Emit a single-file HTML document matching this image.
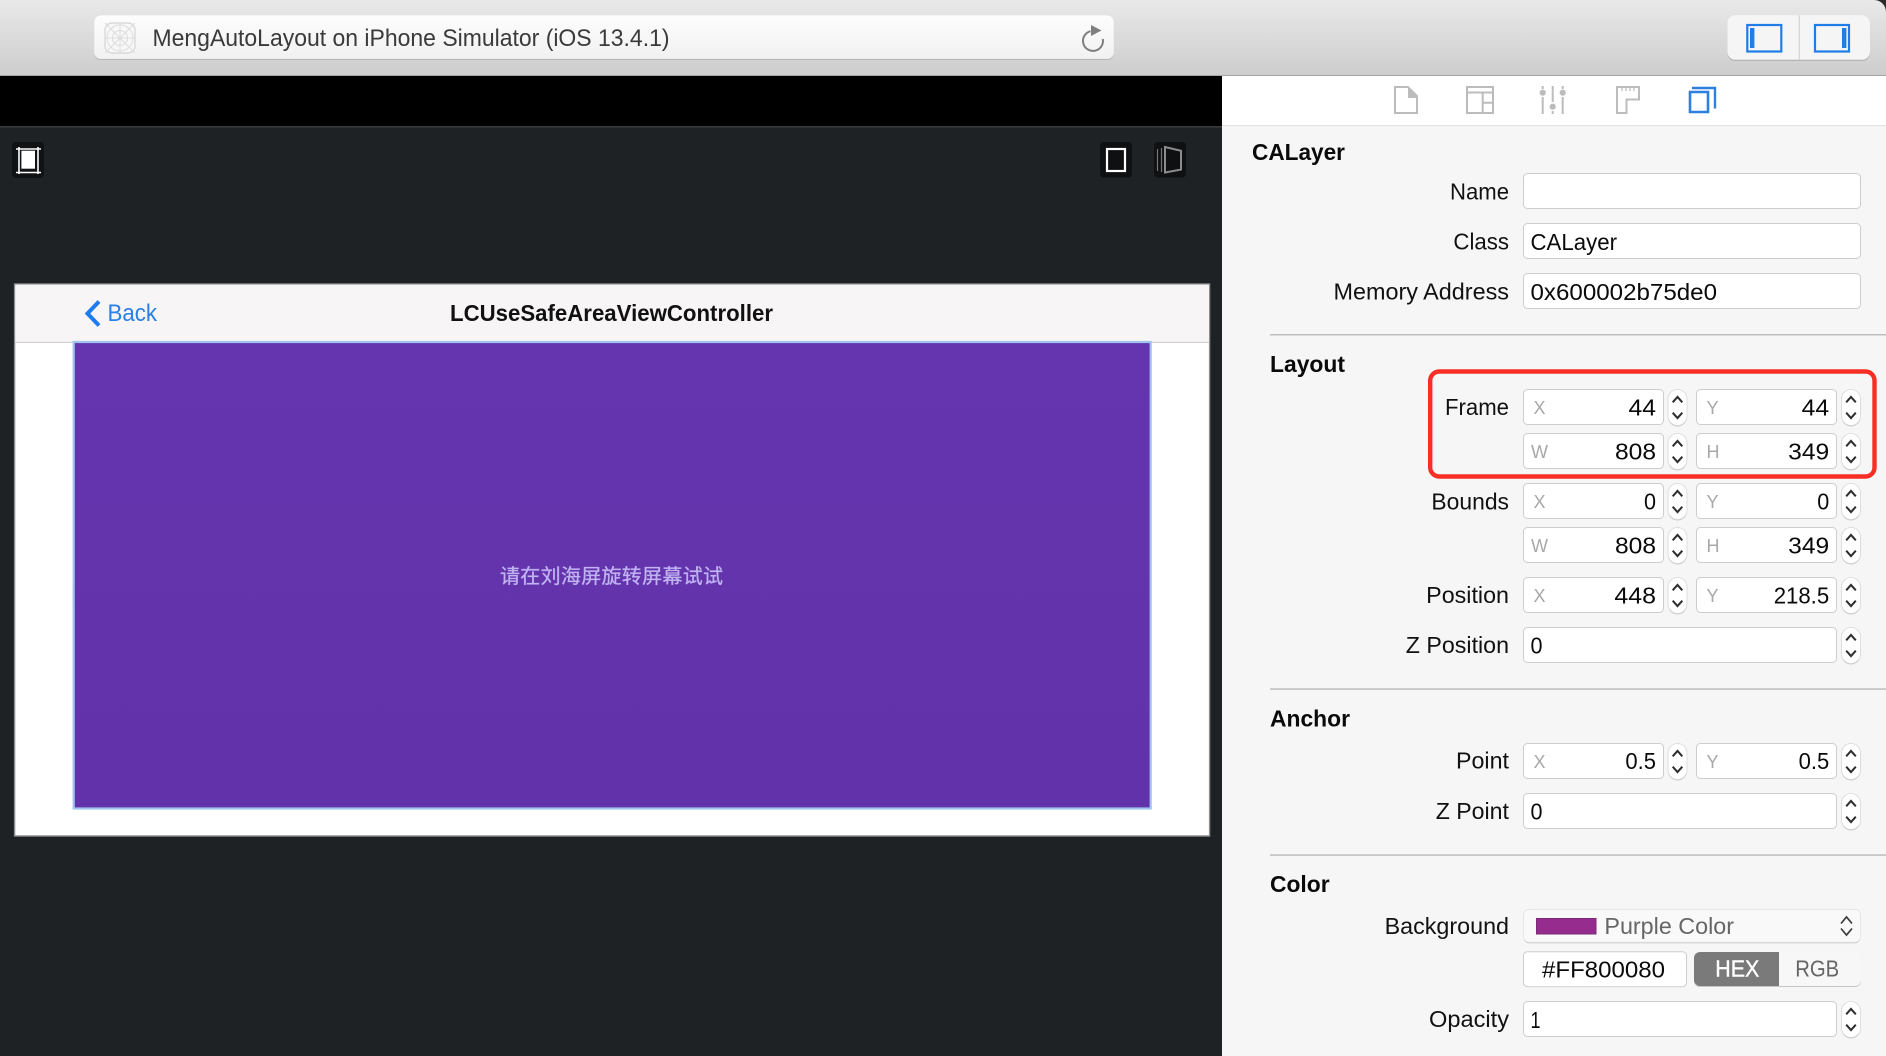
<!DOCTYPE html>
<html lang="zh">
<head>
<meta charset="utf-8">
<title>MengAutoLayout</title>
<style>
html,body{margin:0;padding:0;width:1886px;height:1056px;overflow:hidden;background:#1e2224}
svg{position:absolute;left:0;top:0;display:block}
text{font-family:"Liberation Sans","Noto Sans CJK SC",sans-serif}
.l{font-size:23px;fill:#111;text-anchor:end}
.h{font-size:23px;font-weight:bold;fill:#0a0a0a}
.v{font-size:23px;fill:#0a0a0a}
.r{font-size:23px;fill:#0a0a0a;text-anchor:end}
.p{font-size:18px;fill:#a8a8a8}
.f{fill:#fff;stroke:#cdcdcd;stroke-width:1}
.ic{fill:none;stroke:#bcbcbc;stroke-width:2}
</style>
</head>
<body>
<svg width="1886" height="1056" viewBox="0 0 1886 1056" xmlns="http://www.w3.org/2000/svg">
<defs>
<linearGradient id="tb" x1="0" y1="0" x2="0" y2="1"><stop offset="0" stop-color="#e9e9e9"/><stop offset="1" stop-color="#cdcdcd"/></linearGradient>
<linearGradient id="ub" x1="0" y1="0" x2="0" y2="1"><stop offset="0" stop-color="#fdfdfd"/><stop offset="1" stop-color="#f1f1f1"/></linearGradient>
<linearGradient id="pu" x1="0" y1="0" x2="0" y2="1"><stop offset="0" stop-color="#6535af"/><stop offset="1" stop-color="#6232aa"/></linearGradient>
<g id="st">
<rect x="0" y="1" width="19" height="36" rx="9.5" fill="#000" opacity=".2"/>
<rect x="0" y="0" width="19" height="36" rx="9.5" fill="#fff" stroke="#d8d8d8" stroke-width=".8"/>
<path d="M4.7 12.8 9.5 7.4 14.3 12.8M4.7 23.2 9.5 28.6 14.3 23.2" fill="none" stroke="#2e2e2e" stroke-width="2"/>
</g>
</defs>

<!-- title bar -->
<rect width="1886" height="75" fill="url(#tb)"/>
<rect y="75" width="1886" height="1.2" fill="#a6a6a6"/>
<path d="M1874 0H1886V12A12 12 0 0 0 1874 0Z" fill="#2b2b2b"/>
<rect x="94" y="16" width="1020" height="44" rx="7" fill="#a9a9a9"/>
<rect x="94" y="15" width="1020" height="44" rx="7" fill="url(#ub)" stroke="#dedede" stroke-width=".6"/>
<g>
<rect x="105" y="23" width="30" height="30" rx="7" fill="#f7f7f7" stroke="#d4d4d4" stroke-width="1.2"/>
<g fill="none" stroke="#dcdcdc" stroke-width="1">
<circle cx="120" cy="38" r="13"/><circle cx="120" cy="38" r="7.5"/>
<path d="M105 23 135 53M135 23 105 53M120 23V53M105 38H135"/>
</g>
</g>
<text x="152.5" y="46" font-size="24" fill="#3a3a3a" textLength="517" lengthAdjust="spacingAndGlyphs">MengAutoLayout on iPhone Simulator (iOS 13.4.1)</text>
<path d="M1090.5 31.2A10 10 0 1 0 1102.8 39" fill="none" stroke="#7f7f7f" stroke-width="2"/>
<path d="M1091 25V36L1101.5 30.5Z" fill="#7f7f7f"/>

<rect x="1727.3" y="16.3" width="142.7" height="44.5" rx="8" fill="#a9a9a9"/>
<rect x="1727.3" y="15.3" width="142.7" height="44.5" rx="8" fill="#f5f5f5"/>
<rect x="1798.6" y="15.3" width="1.4" height="44.5" fill="#d8d8d8"/>
<rect x="1747.3" y="25" width="34" height="26.5" fill="none" stroke="#1f7de8" stroke-width="2.2"/>
<rect x="1750" y="28" width="4.4" height="20" fill="#1f7de8"/>
<rect x="1815" y="25" width="34" height="26.5" fill="none" stroke="#1f7de8" stroke-width="2.2"/>
<rect x="1842" y="28" width="4.4" height="20" fill="#1f7de8"/>

<!-- black strip and canvas -->
<rect y="76" width="1222" height="50" fill="#000"/>
<rect y="126" width="1222" height="930" fill="#1e2224"/>
<rect y="126" width="1222" height="1.5" fill="#3b3e3f"/>

<rect x="12" y="142" width="32" height="36" rx="4" fill="#101214"/>
<rect x="21.4" y="150.7" width="13.6" height="18" fill="#fff"/>
<path d="M19 147V174M38 147V174M16 149H41M16 172.5H41" fill="none" stroke="#fff" stroke-width="1.6"/>

<rect x="1100" y="142" width="32" height="35.5" rx="4" fill="#0e1012"/>
<rect x="1107" y="149" width="18" height="22" fill="none" stroke="#fff" stroke-width="2.2"/>
<rect x="1154" y="142" width="32" height="35.5" rx="4" fill="#0e1012"/>
<path d="M1157.5 149V171M1161.5 148V172" stroke="#777" stroke-width="1.2" fill="none"/>
<path d="M1165 147 1181 150.8V169.6L1165 172.5Z" fill="none" stroke="#8c8c8c" stroke-width="2"/>

<!-- phone screen -->
<rect x="14.6" y="284" width="1195" height="552" fill="#fff" stroke="#8c8c8c" stroke-width="1.4"/>
<rect x="15.3" y="284.7" width="1193.6" height="57.1" fill="#f7f5f6"/>
<rect x="15.3" y="341.8" width="1193.6" height="1.2" fill="#d2d2d2"/>
<rect x="73.7" y="342" width="1077" height="466.5" fill="url(#pu)" stroke="#9fc5ee" stroke-width="2.2"/>
<path d="M99 301.5 87.5 313.5 99 325.5" fill="none" stroke="#1f7cee" stroke-width="4"/>
<text x="107.5" y="321" font-size="24" fill="#2a7fe8" textLength="49.5" lengthAdjust="spacingAndGlyphs">Back</text>
<text x="450" y="321" font-size="23" font-weight="bold" fill="#111" textLength="323" lengthAdjust="spacingAndGlyphs">LCUseSafeAreaViewController</text>
<text x="500" y="583" font-size="20" fill="#c2b4f4" stroke="#b9abf0" stroke-width=".35" textLength="223" lengthAdjust="spacing">请在刘海屏旋转屏幕试试</text>

<!-- inspector -->
<rect x="1222" y="76" width="664" height="980" fill="#f6f6f6"/>
<rect x="1222" y="76" width="664" height="49.5" fill="#fff"/>
<rect x="1222" y="125" width="664" height="1.2" fill="#e6e6e6"/>

<path d="M1395 87H1408L1417 96V113H1395Z" class="ic"/>
<path d="M1408 87 1417 96V98H1408Z" fill="#bcbcbc"/>
<rect x="1467" y="87" width="26" height="26" class="ic"/>
<path d="M1467 92.5H1493M1482.7 92.5V113M1482.7 102.7H1493" class="ic"/>
<path d="M1542.7 86V89M1542.7 97V114M1552.7 86V102M1552.7 111V114M1562.7 86V89M1562.7 97V114" stroke="#bcbcbc" stroke-width="2" fill="none"/>
<circle cx="1542.7" cy="92.7" r="3.1" fill="#bcbcbc"/>
<circle cx="1552.7" cy="106.7" r="3.1" fill="#bcbcbc"/>
<circle cx="1562.7" cy="92.7" r="3.1" fill="#bcbcbc"/>
<path d="M1617 87H1639V99.5H1626.5V113H1617Z" class="ic"/>
<path d="M1622 87V91M1626 87V91M1630 87V91M1634 87V91" stroke="#bcbcbc" stroke-width="1.2" fill="none"/>
<path d="M1690 109V92H1708V112H1690Z" fill="none" stroke="#2d7fe0" stroke-width="2.6"/>
<path d="M1692 88H1715V108.5" fill="none" stroke="#2d7fe0" stroke-width="2.4"/>

<!-- section: CALayer -->
<text x="1252" y="160" class="h" textLength="93" lengthAdjust="spacingAndGlyphs">CALayer</text>
<text x="1509" y="199.3" class="l" textLength="59" lengthAdjust="spacingAndGlyphs">Name</text>
<rect x="1523.5" y="173.5" width="337" height="35" rx="4" class="f"/>
<text x="1509" y="249.3" class="l" textLength="55.6" lengthAdjust="spacingAndGlyphs">Class</text>
<rect x="1523.5" y="223.5" width="337" height="35" rx="4" class="f"/>
<text x="1530.5" y="250" class="v" textLength="86.5" lengthAdjust="spacingAndGlyphs">CALayer</text>
<text x="1509" y="299.3" class="l" textLength="175.5" lengthAdjust="spacingAndGlyphs">Memory Address</text>
<rect x="1523.5" y="273.5" width="337" height="35" rx="4" class="f"/>
<text x="1530.5" y="300" class="v" textLength="186.5" lengthAdjust="spacingAndGlyphs">0x600002b75de0</text>
<rect x="1270" y="334" width="616" height="1.5" fill="#bdbdbd"/>

<!-- Layout -->
<text x="1270" y="372.2" class="h" textLength="75" lengthAdjust="spacingAndGlyphs">Layout</text>

<text x="1509" y="415" class="l" textLength="64" lengthAdjust="spacingAndGlyphs">Frame</text>
<rect x="1523.5" y="389.5" width="140" height="35" rx="4" class="f"/>
<text x="1533.5" y="414" class="p">X</text>
<text x="1656" y="415.3" class="r" textLength="27.5" lengthAdjust="spacingAndGlyphs">44</text>
<use href="#st" x="1668" y="389.5"/>
<rect x="1696.5" y="389.5" width="140" height="35" rx="4" class="f"/>
<text x="1706.5" y="414" class="p">Y</text>
<text x="1829.2" y="415.3" class="r" textLength="27.5" lengthAdjust="spacingAndGlyphs">44</text>
<use href="#st" x="1841.5" y="389.5"/>

<rect x="1523.5" y="433.5" width="140" height="35" rx="4" class="f"/>
<text x="1531" y="458" class="p">W</text>
<text x="1656" y="459.3" class="r" textLength="41" lengthAdjust="spacingAndGlyphs">808</text>
<use href="#st" x="1668" y="433.5"/>
<rect x="1696.5" y="433.5" width="140" height="35" rx="4" class="f"/>
<text x="1706.5" y="458" class="p">H</text>
<text x="1829.2" y="459.3" class="r" textLength="41" lengthAdjust="spacingAndGlyphs">349</text>
<use href="#st" x="1841.5" y="433.5"/>

<rect x="1430.2" y="371.5" width="444.3" height="105" rx="9" fill="none" stroke="#f92f26" stroke-width="4.4"/>

<text x="1509" y="509.3" class="l" textLength="77.6" lengthAdjust="spacingAndGlyphs">Bounds</text>
<rect x="1523.5" y="483.5" width="140" height="35" rx="4" class="f"/>
<text x="1533.5" y="508" class="p">X</text>
<text x="1656" y="509.3" class="r" textLength="12" lengthAdjust="spacingAndGlyphs">0</text>
<use href="#st" x="1668" y="483.5"/>
<rect x="1696.5" y="483.5" width="140" height="35" rx="4" class="f"/>
<text x="1706.5" y="508" class="p">Y</text>
<text x="1829.2" y="509.3" class="r" textLength="12" lengthAdjust="spacingAndGlyphs">0</text>
<use href="#st" x="1841.5" y="483.5"/>

<rect x="1523.5" y="527.5" width="140" height="35" rx="4" class="f"/>
<text x="1531" y="552" class="p">W</text>
<text x="1656" y="553.3" class="r" textLength="41" lengthAdjust="spacingAndGlyphs">808</text>
<use href="#st" x="1668" y="527.5"/>
<rect x="1696.5" y="527.5" width="140" height="35" rx="4" class="f"/>
<text x="1706.5" y="552" class="p">H</text>
<text x="1829.2" y="553.3" class="r" textLength="41" lengthAdjust="spacingAndGlyphs">349</text>
<use href="#st" x="1841.5" y="527.5"/>

<text x="1509" y="603.2" class="l" textLength="82.8" lengthAdjust="spacingAndGlyphs">Position</text>
<rect x="1523.5" y="577.5" width="140" height="35" rx="4" class="f"/>
<text x="1533.5" y="602" class="p">X</text>
<text x="1656" y="603.3" class="r" textLength="41.6" lengthAdjust="spacingAndGlyphs">448</text>
<use href="#st" x="1668" y="577.5"/>
<rect x="1696.5" y="577.5" width="140" height="35" rx="4" class="f"/>
<text x="1706.5" y="602" class="p">Y</text>
<text x="1829.2" y="603.3" class="r" textLength="55.5" lengthAdjust="spacingAndGlyphs">218.5</text>
<use href="#st" x="1841.5" y="577.5"/>

<text x="1509" y="653.2" class="l" textLength="103.2" lengthAdjust="spacingAndGlyphs">Z Position</text>
<rect x="1523.5" y="627.5" width="313" height="35" rx="4" class="f"/>
<text x="1530.5" y="653.3" class="v" textLength="12" lengthAdjust="spacingAndGlyphs">0</text>
<use href="#st" x="1841.5" y="627.5"/>
<rect x="1270" y="688.3" width="616" height="1.5" fill="#bdbdbd"/>

<!-- Anchor -->
<text x="1270" y="726.3" class="h" textLength="80" lengthAdjust="spacingAndGlyphs">Anchor</text>
<text x="1509" y="768.7" class="l" textLength="53" lengthAdjust="spacingAndGlyphs">Point</text>
<rect x="1523.5" y="743.5" width="140" height="35" rx="4" class="f"/>
<text x="1533.5" y="768" class="p">X</text>
<text x="1656" y="769" class="r" textLength="30.6" lengthAdjust="spacingAndGlyphs">0.5</text>
<use href="#st" x="1668" y="743.5"/>
<rect x="1696.5" y="743.5" width="140" height="35" rx="4" class="f"/>
<text x="1706.5" y="768" class="p">Y</text>
<text x="1829.2" y="769" class="r" textLength="30.6" lengthAdjust="spacingAndGlyphs">0.5</text>
<use href="#st" x="1841.5" y="743.5"/>

<text x="1509" y="819.2" class="l" textLength="73.3" lengthAdjust="spacingAndGlyphs">Z Point</text>
<rect x="1523.5" y="793.5" width="313" height="35" rx="4" class="f"/>
<text x="1530.5" y="819.3" class="v" textLength="12" lengthAdjust="spacingAndGlyphs">0</text>
<use href="#st" x="1841.5" y="793.5"/>
<rect x="1270" y="854.3" width="616" height="1.5" fill="#bdbdbd"/>

<!-- Color -->
<text x="1270" y="892" class="h" textLength="59.6" lengthAdjust="spacingAndGlyphs">Color</text>
<text x="1509" y="933.8" class="l" textLength="124.4" lengthAdjust="spacingAndGlyphs">Background</text>
<rect x="1523.5" y="910.3" width="337" height="33" rx="6" fill="#bbb"/>
<rect x="1523.5" y="909.3" width="337" height="33" rx="6" fill="#f9f9f9" stroke="#e2e2e2" stroke-width=".8"/>
<rect x="1536.5" y="918.5" width="59.5" height="15.5" fill="#962c8e" stroke="#7a2a78" stroke-width="1"/>
<text x="1604.4" y="933.8" font-size="23" fill="#666" textLength="129.6" lengthAdjust="spacingAndGlyphs">Purple Color</text>
<path d="M1841 923.5 1846.5 917 1852 923.5M1841 928.5 1846.5 935 1852 928.5" fill="none" stroke="#3c3c3c" stroke-width="1.7"/>

<rect x="1523.5" y="951.7" width="163" height="35" rx="4" class="f"/>
<text x="1542" y="977.3" class="v" textLength="123" lengthAdjust="spacingAndGlyphs">#FF800080</text>
<rect x="1694" y="953" width="167" height="34" rx="6" fill="#c4c4c4"/>
<rect x="1694" y="952" width="167" height="34" rx="6" fill="#f7f7f7"/>
<path d="M1779 952H1700A6 6 0 0 0 1694 958V980A6 6 0 0 0 1700 986H1779Z" fill="#7a7a7a"/>
<text x="1715.3" y="976.7" font-size="23" fill="#fff" stroke="#fff" stroke-width=".4" textLength="44" lengthAdjust="spacingAndGlyphs">HEX</text>
<text x="1795.2" y="976.7" font-size="23" fill="#666" textLength="44" lengthAdjust="spacingAndGlyphs">RGB</text>

<text x="1509" y="1027.2" class="l" textLength="80" lengthAdjust="spacingAndGlyphs">Opacity</text>
<rect x="1523.5" y="1001.5" width="313" height="35" rx="4" class="f"/>
<text x="1530.5" y="1028" class="v" textLength="10" lengthAdjust="spacingAndGlyphs">1</text>
<use href="#st" x="1841.5" y="1001.5"/>
</svg>
</body>
</html>
